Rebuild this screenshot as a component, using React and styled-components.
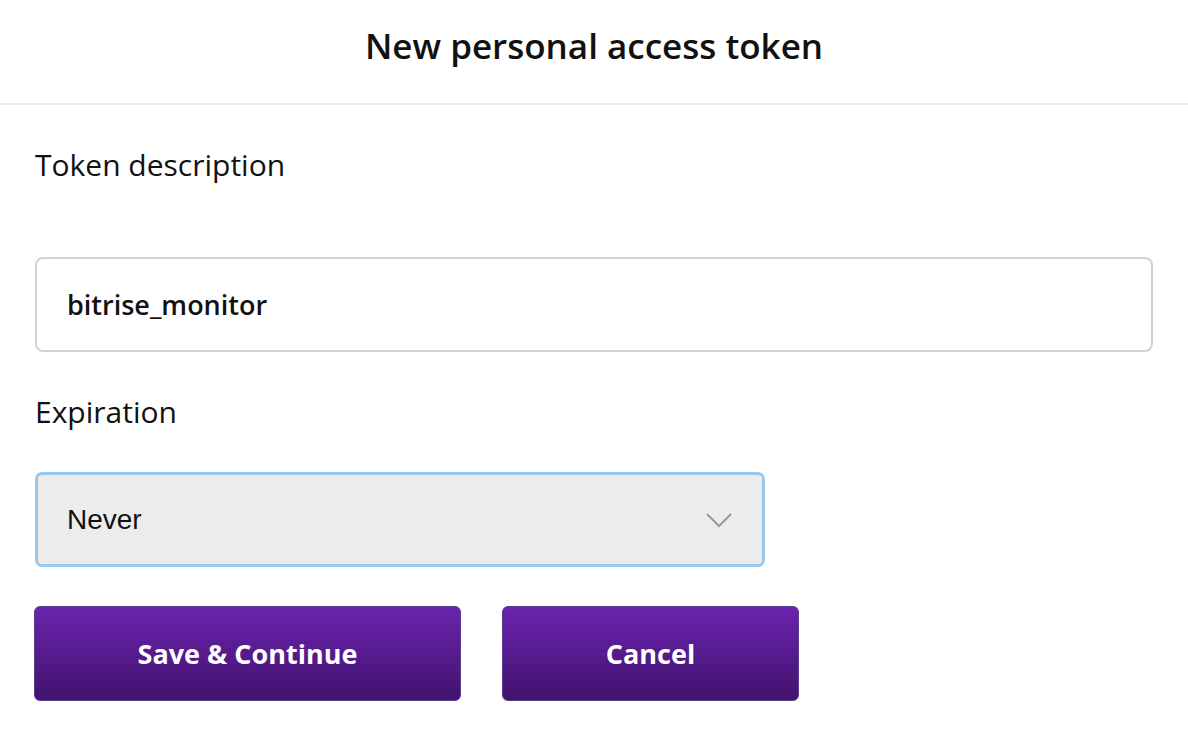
import React from 'react';
import styled, { createGlobalStyle } from 'styled-components';

const GlobalStyle = createGlobalStyle`
  body {
    margin: 0;
    background: #fff;
    font-family: "Open Sans", Lato, sans-serif;
    color: #111;
  }
`;

const Page = styled.div`
  width: 1188px;
  min-height: 738px;
  background: #fff;
`;

const Header = styled.header`
  height: 105px;
  display: flex;
  align-items: center;
  justify-content: center;
  border-bottom: 2px solid #ebebeb;
  box-sizing: border-box;
  h1 {
    margin: 0;
    font-size: 35px;
    font-weight: 600;
    letter-spacing: 0;
    padding-bottom: 12px;
  }
`;

const Form = styled.form`
  padding: 40px 35px 0 35px;
  display: flex;
  flex-direction: column;
`;

const Label = styled.label`
  font-size: 30px;
  line-height: 40px;
  font-weight: 400;
  color: #111;
  margin-bottom: ${p => p.gap}px;
`;

const TextInput = styled.input`
  box-sizing: border-box;
  height: 95px;
  width: 100%;
  border: 2px solid #d2d2d2;
  border-radius: 8px;
  padding: 0 30px;
  font-family: "Open Sans", sans-serif;
  font-size: 27px;
  font-weight: 600;
  color: #111;
  margin-bottom: 40px;
  outline: none;
`;

const SelectBox = styled.div`
  box-sizing: border-box;
  position: relative;
  width: 730px;
  height: 95px;
  border: 3px solid #9cc8ec;
  border-radius: 7px;
  background: #ececec;
  display: flex;
  align-items: center;
  padding: 0 29px;
  font-family: "Liberation Sans", Arial, sans-serif;
  font-size: 28px;
  color: #111;
  margin-bottom: 39px;
  svg {
    position: absolute;
    right: 29px;
    top: 50%;
    transform: translateY(-50%);
  }
`;

const Buttons = styled.div`
  display: flex;
  gap: 41px;
  margin-left: -1px;
`;

const Button = styled.button`
  box-sizing: border-box;
  width: ${p => p.w}px;
  height: 95px;
  border: 1.5px solid #5c3b8c;
  border-radius: 6px;
  background: linear-gradient(to bottom, #6a23ae, #42136e);
  color: #fff;
  font-family: "Open Sans", sans-serif;
  font-size: 27px;
  font-weight: 700;
  cursor: pointer;
`;

export default function App() {
  return (
    <Page>
      <GlobalStyle />
      <Header>
        <h1>New personal access token</h1>
      </Header>
      <Form onSubmit={e => e.preventDefault()}>
        <Label gap={72}>Token description</Label>
        <TextInput defaultValue="bitrise_monitor" />
        <Label gap={40}>Expiration</Label>
        <SelectBox>
          Never
          <svg width="28" height="16" viewBox="0 0 28 16">
            <polyline points="2,2 14,14 26,2" fill="none" stroke="#9a9a9a" strokeWidth="2" />
          </svg>
        </SelectBox>
        <Buttons>
          <Button w={427}>Save &amp; Continue</Button>
          <Button w={297}>Cancel</Button>
        </Buttons>
      </Form>
    </Page>
  );
}
